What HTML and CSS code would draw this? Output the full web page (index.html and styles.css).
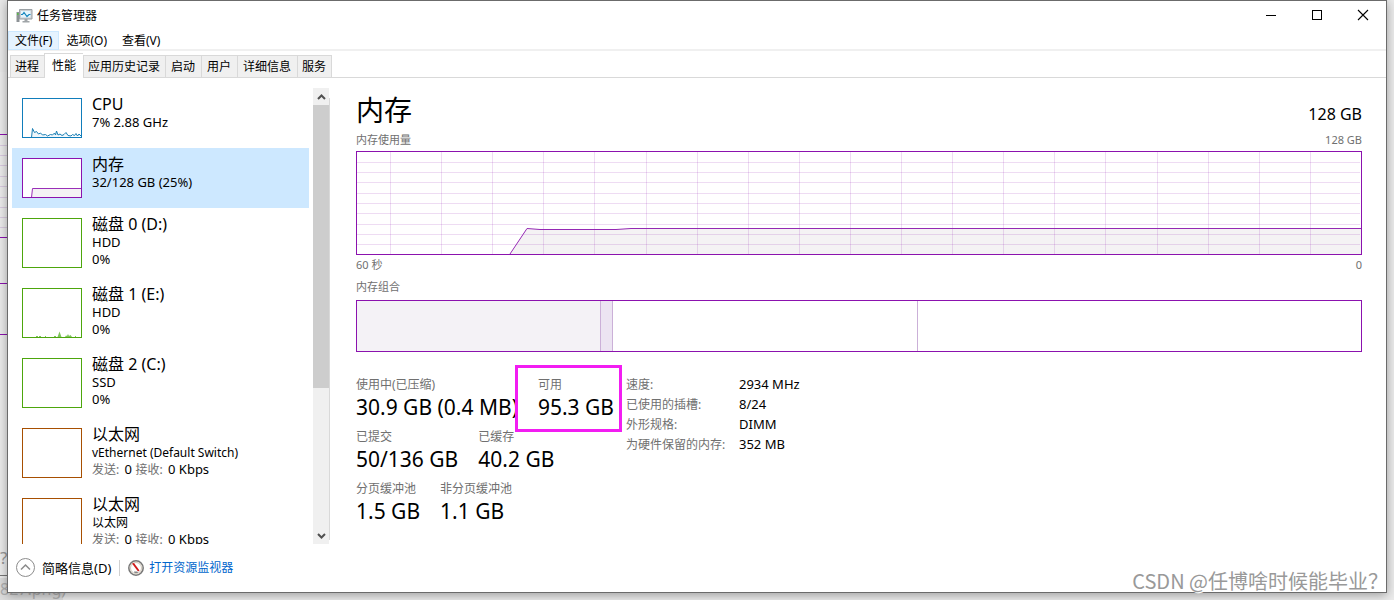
FILE: index.html
```html
<!DOCTYPE html>
<html lang="zh-CN">
<head>
<meta charset="utf-8">
<title>任务管理器</title>
<link rel="stylesheet" href="styles.css">
</head>
<body>
<div class="backdrop" aria-hidden="true">
  <svg class="backdrop-lines" width="8" height="600" shape-rendering="crispEdges">
    <path fill="#e9e9e9" d="M0 0h8v72H0z"/>
    <path stroke="#d9cbe0" d="M0 145.5h8M0 155.5h8M0 165.5h8M0 176.5h8M0 186.5h8M0 197.5h8M0 207.5h8M0 217.5h8M0 227.5h8"/>
    <path stroke="#8b12ae" d="M0 134.5h8M0 237.5h8M0 283.5h8M0 334.5h8"/>
    <path stroke="#777" d="M0 575.5h8"/>
  </svg>
  <span class="backdrop-mark">?</span>
  <span class="backdrop-file">827.png)</span>
</div>
<div class="window">
  <header class="titlebar">
    <svg class="app-icon" width="18" height="16" viewBox="0 0 18 16">
      <path fill="#8d9296" d="M.5 4h3v10h-3z"/><path fill="#58b947" d="M1 5h1.5v2H1z"/>
      <path fill="#c9ced2" stroke="#9aa0a4" d="M3.500 1.500h12.500v9.500h-12.500z"/>
      <path fill="#e6f5fc" d="M5 3h9.500v6.500h-9.500z"/>
      <path fill="none" stroke="#1787bf" stroke-width="1.200" d="M5 6.500h1.500l1.500-2 3 4 2-2h1.500"/>
      <path fill="#a0a5a8" d="M8.500 11h3v2h2v1.500h-7V13h2z"/>
    </svg>
    <h1 class="title">任务管理器</h1>
    <button class="caption-button" aria-label="最小化"><svg width="12" height="12" shape-rendering="crispEdges"><path stroke="#000" d="M1 6.500h10"/></svg></button>
    <button class="caption-button" aria-label="最大化"><svg width="12" height="12" shape-rendering="crispEdges"><path fill="none" stroke="#000" d="M1.500 1.500h9v9h-9z"/></svg></button>
    <button class="caption-button" aria-label="关闭"><svg width="12" height="12"><path stroke="#000" stroke-width="1.100" d="M1 1l10 10M11 1L1 11"/></svg></button>
  </header>
  <nav class="menubar">
    <button class="menu menu-hot">文件(F)</button>
    <button class="menu">选项(O)</button>
    <button class="menu">查看(V)</button>
  </nav>
  <div class="tabs" role="tablist">
    <button class="tab tab-compact" role="tab">进程</button>
    <button class="tab tab-active" role="tab" aria-selected="true">性能</button>
    <button class="tab tab-compact" role="tab">应用历史记录</button>
    <button class="tab" role="tab">启动</button>
    <button class="tab" role="tab">用户</button>
    <button class="tab" role="tab">详细信息</button>
    <button class="tab tab-compact" role="tab">服务</button>
  </div>
  <div class="content">
    <aside class="sidebar">
      <ul class="devices">
        <li class="device">
          <svg class="thumb" width="60" height="40" viewBox="0 0 60 40">
            <path fill="#eef6fb" stroke="#1a7fb5" d="M9.500 39.500l1-9 2 4 2-1 2 2.500 2-1 2 2 3-.5 2 1.500 3-1.500 2 .5 2-2 1 2 1-4 1.500 4 2-1 2 1.500 2-1 2-2 2 3 3 .5 1.500-1.500 2 1 1.500-2 1.500 2.500 1.500-2 2 2"/>
            <path class="thumb-frame frame-cpu" d="M.5.5h59v39H.5z"/>
          </svg>
          <div class="device-text"><h2 class="device-name">CPU</h2><p class="device-line">7% 2.88 GHz</p></div>
        </li>
        <li class="device device-selected">
          <svg class="thumb" width="60" height="40" viewBox="0 0 60 40">
            <path fill="#f4f2f4" stroke="#9a2fb8" d="M9.500 39.500l1-9h49v9"/>
            <path class="thumb-frame frame-memory" d="M.5.5h59v39H.5z"/>
          </svg>
          <div class="device-text"><h2 class="device-name">内存</h2><p class="device-line">32/128 GB (25%)</p></div>
        </li>
        <li class="device">
          <svg class="thumb" width="60" height="50"><path class="thumb-frame frame-disk" d="M.5.5h59v49H.5z"/></svg>
          <div class="device-text"><h2 class="device-name">磁盘 0 (D:)</h2><p class="device-line">HDD</p><p class="device-line">0%</p></div>
        </li>
        <li class="device">
          <svg class="thumb" width="60" height="50">
            <path fill="#7fc45c" d="M14 49v-1h2v1zM17 49v-1h2v1zM23 49v-1h1v1zM32 49v-1h2v1zM35.500 49l2-5.500 2 5.500zM43 49l1-1.500 1 .5 1-2 1 2 1.500-1 1.500 2zM53 49v-1h1v1z"/>
            <path class="thumb-frame frame-disk" d="M.5.5h59v49H.5z"/>
          </svg>
          <div class="device-text"><h2 class="device-name">磁盘 1 (E:)</h2><p class="device-line">HDD</p><p class="device-line">0%</p></div>
        </li>
        <li class="device">
          <svg class="thumb" width="60" height="50"><path class="thumb-frame frame-disk" d="M.5.5h59v49H.5z"/></svg>
          <div class="device-text"><h2 class="device-name">磁盘 2 (C:)</h2><p class="device-line">SSD</p><p class="device-line">0%</p></div>
        </li>
        <li class="device">
          <svg class="thumb" width="60" height="50"><path class="thumb-frame frame-network" d="M.5.5h59v49H.5z"/></svg>
          <div class="device-text"><h2 class="device-name">以太网</h2><p class="device-line adapter">vEthernet (Default Switch)</p><p class="device-line"><span class="muted">发送:</span> 0 <span class="muted">接收:</span> 0 Kbps</p></div>
        </li>
        <li class="device">
          <svg class="thumb" width="60" height="50"><path class="thumb-frame frame-network" d="M.5.5h59v49H.5z"/></svg>
          <div class="device-text"><h2 class="device-name">以太网</h2><p class="device-line adapter">以太网</p><p class="device-line"><span class="muted">发送:</span> 0 <span class="muted">接收:</span> 0 Kbps</p></div>
        </li>
      </ul>
      <div class="scrollbar">
        <button class="scroll-button" aria-label="向上滚动"><svg width="9" height="6"><path fill="none" stroke="#505050" stroke-width="2" d="M1 5l3.500-3.500L8 5"/></svg></button>
        <div class="scroll-track"><div class="scroll-thumb"></div></div>
        <button class="scroll-button" aria-label="向下滚动"><svg width="9" height="6"><path fill="none" stroke="#505050" stroke-width="2" d="M1 1l3.500 3.500L8 1"/></svg></button>
      </div>
      <div class="splitter"></div>
    </aside>
    <main class="detail">
      <div class="detail-header"><h2 class="detail-title">内存</h2><span class="detail-capacity">128 GB</span></div>
      <div class="caption"><span>内存使用量</span><span>128 GB</span></div>
      <svg class="usage-chart" viewBox="0 0 1006 104" preserveAspectRatio="none">
        <path fill="#f4f2f4" d="M155 103L171 77.500L184 78.500H260L275 77.500H1005V103z"/>
        <path class="grid-line" d="M34.500 1v102M85.500 1v102M136.500 1v102M187.500 1v102M238.500 1v102M290.500 1v102M341.500 1v102M392.500 1v102M443.500 1v102M494.500 1v102M545.500 1v102M596.500 1v102M647.500 1v102M698.500 1v102M749.500 1v102M801.500 1v102M852.500 1v102M903.500 1v102M954.500 1v102"/>
        <path class="grid-line" d="M1 11.500h1003M1 21.500h1003M1 31.500h1003M1 42.500h1003M1 52.500h1003M1 62.500h1003M1 73.500h1003M1 83.500h1003M1 93.500h1003"/>
        <path class="usage-line" d="M154 103L171 77.500L184 78.500H260L275 77.500H1005"/>
        <path class="chart-frame" d="M.5.5h1005v103H.5z"/>
      </svg>
      <div class="axis"><span>60 秒</span><span>0</span></div>
      <div class="caption composition-caption"><span>内存组合</span></div>
      <div class="composition">
        <div class="segment in-use"></div><div class="segment modified"></div><div class="segment standby"></div><div class="segment free"></div>
      </div>
      <div class="facts">
        <div class="stats">
          <div class="stat-row">
            <div class="stat"><div class="stat-label">使用中(已压缩)</div><div class="stat-value">30.9 GB (0.4 MB)</div></div>
            <div class="stat stat-marked"><div class="stat-label">可用</div><div class="stat-value">95.3 GB</div></div>
          </div>
          <div class="stat-row">
            <div class="stat"><div class="stat-label">已提交</div><div class="stat-value">50/136 GB</div></div>
            <div class="stat"><div class="stat-label">已缓存</div><div class="stat-value">40.2 GB</div></div>
          </div>
          <div class="stat-row">
            <div class="stat"><div class="stat-label">分页缓冲池</div><div class="stat-value">1.5 GB</div></div>
            <div class="stat"><div class="stat-label">非分页缓冲池</div><div class="stat-value">1.1 GB</div></div>
          </div>
        </div>
        <dl class="hardware">
          <dt>速度:</dt><dd>2934 MHz</dd>
          <dt>已使用的插槽:</dt><dd>8/24</dd>
          <dt>外形规格:</dt><dd>DIMM</dd>
          <dt>为硬件保留的内存:</dt><dd>352 MB</dd>
        </dl>
      </div>
    </main>
  </div>
  <footer class="footer">
    <button class="collapse">
      <svg width="19" height="19"><circle cx="9.500" cy="9.500" r="9" fill="#fff" stroke="#8c8c8c"/><path fill="none" stroke="#8c8c8c" stroke-width="1.500" d="M5 11.500L9.500 7l4.500 4.500"/></svg>
      <span>简略信息(D)</span>
    </button>
    <a class="monitor-link" href="#">
      <svg width="16" height="16"><circle cx="8" cy="8" r="7.200" fill="#f5f1ea" stroke="#777" stroke-width="1.500"/><circle cx="8" cy="8" r="5.500" fill="#fff" stroke="#c8beb0" stroke-width=".8"/><path fill="#d01818" d="M4 3.500l2-.5 5.500 7.500-1.500 1z"/><path fill="#888" d="M6 11.500h3l1.500 1.500h-4z"/></svg>
      <span>打开资源监视器</span>
    </a>
  </footer>
</div>
<div class="watermark">CSDN @任博啥时候能毕业？</div>
</body>
</html>
```
FILE: styles.css
```css
* { box-sizing: border-box; }

body {
  position: relative;
  display: flex;
  height: 100vh;
  margin: 0;
  padding: 0 7px 7px;
  overflow: hidden;
  background: #ececec;
  color: #000;
  font: 12px/16px "Noto Sans", "Noto Sans CJK SC", sans-serif;
}

h1, h2, p, ul, dl, dd { margin: 0; padding: 0; font-weight: 400; }

button {
  margin: 0;
  padding: 0;
  border: 0;
  background: none;
  color: inherit;
  font: inherit;
}

svg { display: block; flex: none; }

.backdrop {
  position: absolute;
  inset: 0;
  color: #999;
  font-size: 17px;
  line-height: 20px;
}
.backdrop-lines { position: absolute; left: 0; top: 0; }
.backdrop-mark { position: absolute; left: 0; bottom: 32px; }
.backdrop-file {
  position: absolute;
  left: 0;
  bottom: 0;
  width: 63px;
  background: #dcdcdc;
  color: #b0b0b0;
  font-size: 16px;
  line-height: 22px;
}

.window {
  position: relative;
  display: flex;
  flex: 1;
  flex-direction: column;
  min-width: 0;
  border: 1px solid #6b6b6b;
  background: #fff;
  box-shadow: 0 2px 10px rgba(0, 0, 0, 0.35);
}

.titlebar { display: flex; align-items: center; height: 30px; padding-left: 8px; }
.title { flex: 1; margin-left: 3px; font-size: 12px; line-height: 16px; }
.caption-button {
  display: flex;
  align-items: center;
  justify-content: center;
  align-self: flex-start;
  width: 46px;
  height: 28px;
}

.menubar { display: flex; height: 20px; border-bottom: 2px solid #f0f0f0; }
.menu { height: 19px; padding: 0 7px 0 6px; border: 1px solid transparent; line-height: 17px; white-space: nowrap; }
.menu-hot { padding: 0 6px; border-color: #cce8ff; background: #e5f3ff; }

.tabs {
  display: flex;
  align-items: flex-end;
  height: 27px;
  padding-left: 2px;
  border-bottom: 1px solid #d9d9d9;
}
.tab {
  height: 22px;
  padding: 0 6px 0 5px;
  border: 1px solid #d9d9d9;
  border-width: 1px 0 0 1px;
  background: #f0f0f0;
  line-height: 21px;
  white-space: nowrap;
}
.tab-compact { padding: 0 5px 0 4px; }
.tab:last-child { border-right-width: 1px; }
.tab-active { height: 25px; margin-bottom: -1px; padding: 0 7px; background: #fff; line-height: 22px; }

.content { display: flex; flex: 1; min-height: 0; }

.sidebar { display: flex; flex: none; width: 322px; padding: 10px 0 0 4px; }
.devices { flex: 1; margin-right: 4px; overflow: hidden; list-style: none; }
.device { display: flex; gap: 10px; min-height: 60px; padding: 0 10px 9px; }
.device-selected { background: #cde8ff; }
.thumb { margin-top: 10px; background: #fff; }
.thumb-frame { fill: none; shape-rendering: crispEdges; }
.frame-cpu { stroke: #117dbb; }
.frame-memory { stroke: #8b12ae; }
.frame-disk { stroke: #4da60c; }
.frame-network { stroke: #a74f01; }
.device-text { padding-top: 6px; white-space: nowrap; }
.device-name { font-size: 16px; line-height: 20px; }
.device-line { height: 17px; font-size: 13px; line-height: 17px; }
.device:nth-child(n + 3) { height: 70px; }
.muted { margin-right: 2px; color: #707070; font-size: 12px; }
.adapter { font-size: 12px; }

.scrollbar { display: flex; flex-direction: column; width: 16px; background: #f0f0f0; }
.scroll-button { display: flex; align-items: center; justify-content: center; height: 17px; }
.scroll-track { flex: 1; }
.scroll-thumb { height: 67%; background: #cdcdcd; }
.splitter { width: 1px; margin: 10px 0 4px; background: #d9d9d9; }

.detail { flex: 1; min-width: 0; padding: 15px 24px 0 26px; }
.detail-header { display: flex; align-items: flex-end; justify-content: space-between; height: 36px; }
.detail-title { font-size: 28px; line-height: 38px; }
.detail-capacity { font-size: 16px; line-height: 30px; }
.caption, .axis {
  display: flex;
  justify-content: space-between;
  color: #707070;
  font-size: 11px;
  line-height: 22px;
}
.axis { line-height: 20px; }
.composition-caption { height: 25px; line-height: 24px; }

.usage-chart { width: 100%; height: 104px; }
.usage-chart path { vector-effect: non-scaling-stroke; }
.grid-line { fill: none; stroke: #8b12ae; stroke-opacity: 0.15; shape-rendering: crispEdges; }
.usage-line { fill: none; stroke: #9528b4; }
.chart-frame { fill: none; stroke: #8b12ae; shape-rendering: crispEdges; }

.composition { display: flex; height: 52px; border: 1px solid #8b12ae; }
.segment { border-right: 1px solid #cbb0d8; }
.in-use { flex: 244; background: #f4f2f6; }
.modified { flex: 11; background: #ece4f2; }
.standby { flex: 305; }
.free { flex: 444; border-right: 0; }

.facts { display: flex; margin-top: 22px; }
.stats { display: grid; flex: none; gap: 8px; width: 270px; align-content: start; }
.stat-row { display: flex; gap: 20px; }
.stat { white-space: nowrap; }
.stat-label { color: #707070; line-height: 22px; }
.stat-value { font-size: 21px; line-height: 22px; }
.stat-marked { position: relative; }
.stat-marked::after {
  content: "";
  position: absolute;
  inset: -9px -8px -14px -23px;
  border: 3px solid #f21df2;
}

.hardware {
  display: grid;
  grid-template-columns: 113px auto;
  grid-auto-rows: 20px;
  align-items: baseline;
  align-content: start;
  line-height: 20px;
  white-space: nowrap;
}
.hardware dt { color: #707070; }
.hardware dd { font-size: 13px; }

.footer { display: flex; align-items: center; height: 48px; padding: 0 8px 1px; }
.collapse, .monitor-link { display: flex; align-items: center; }
.collapse { gap: 7px; padding-right: 8px; font-size: 13px; }
.monitor-link {
  gap: 5px;
  padding-left: 8px;
  border-left: 1px solid #d0d0d0;
  color: #0066cc;
  text-decoration: none;
}

.watermark {
  position: absolute;
  right: 6px;
  bottom: 5px;
  color: #999;
  font: 20px/28px "Noto Sans CJK TC", sans-serif;
  text-shadow: 1px 1px 0 #fff;
  white-space: nowrap;
}
```
